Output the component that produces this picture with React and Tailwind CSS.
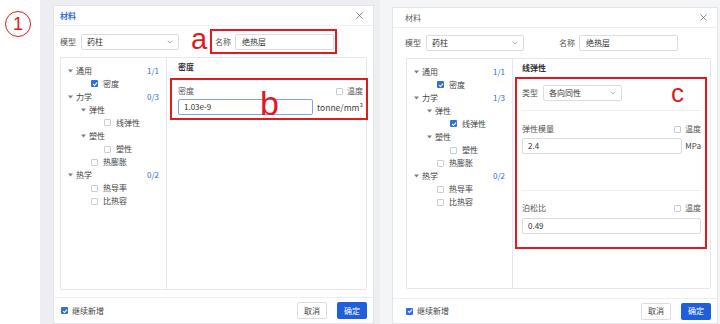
import { ChevronDown, X } from 'lucide-react';

// tree rows: g = group with caret, c = checkbox leaf
const leftTree = [
  { t: 'g', lv: 0, label: '通用', count: '1/1' },
  { t: 'c', lv: 1, label: '密度', checked: true },
  { t: 'g', lv: 0, label: '力学', count: '0/3' },
  { t: 'g', lv: 1, label: '弹性' },
  { t: 'c', lv: 2, label: '线弹性' },
  { t: 'g', lv: 1, label: '塑性' },
  { t: 'c', lv: 2, label: '塑性' },
  { t: 'c', lv: 1, label: '热膨胀' },
  { t: 'g', lv: 0, label: '热学', count: '0/2' },
  { t: 'c', lv: 1, label: '热导率' },
  { t: 'c', lv: 1, label: '比热容' },
];

const rightTree = leftTree.map((r) => {
  if (r.label === '力学') return { ...r, count: '1/3' };
  if (r.label === '线弹性') return { ...r, checked: true };
  return r;
});

function Checkbox({ checked }) {
  if (checked) {
    return (
      <span className="w-[7px] h-[7px] rounded-[1px] bg-[#2f6fe4] flex items-center justify-center shrink-0">
        <svg width="6" height="6" viewBox="0 0 10 10">
          <path d="M1.8 5.2 L4.2 7.5 L8.4 2.6" stroke="white" strokeWidth="1.8" fill="none" />
        </svg>
      </span>
    );
  }
  return <span className="w-[7px] h-[7px] rounded-[1px] border border-[#c9cdd4] bg-white shrink-0" />;
}

function Caret() {
  return (
    <svg width="5" height="4" viewBox="0 0 5 4" className="shrink-0">
      <path d="M0 0.5 H5 L2.5 3.5 Z" fill="#7a7f87" />
    </svg>
  );
}

function TreeRow({ row }) {
  const pad =
    row.t === 'g'
      ? row.lv === 0
        ? 'pl-[7px] gap-[3px]'
        : 'pl-[20px] gap-[3px]'
      : row.lv === 1
      ? 'pl-[30px] gap-[5px]'
      : 'pl-[43px] gap-[5px]';
  return (
    <div className={`h-[13.1px] flex items-center pr-[7px] ${pad}`}>
      {row.t === 'g' ? <Caret /> : <Checkbox checked={row.checked} />}
      <span className="text-[#444]">{row.label}</span>
      {row.count && <span className="ml-auto text-[#2f6fe4]">{row.count}</span>}
    </div>
  );
}

function Select({ value, w }) {
  return (
    <div className={`${w} h-[16px] border border-[#d9dce2] rounded-[2px] bg-white flex items-center pl-[5px] pr-[4px]`}>
      <span className="text-[#333]">{value}</span>
      <ChevronDown size={8} strokeWidth={1.6} className="ml-auto text-[#777]" />
    </div>
  );
}

function TempCheck() {
  return (
    <div className="flex items-center gap-[4px] ml-auto">
      <Checkbox />
      <span className="text-[#555]">温度</span>
    </div>
  );
}

function DensityPanel() {
  return (
    <div className="flex-1 flex flex-col">
      <div className="h-[18px] border-b border-[#eef0f3] flex items-center pl-[11px] font-bold text-[#333]">密度</div>
      <div className="relative mt-[2px] ml-[3px] mr-[2px] border-2 border-[#e3191f] pt-[6px] pb-[3px] pl-[6px] pr-[3px]">
        <div className="h-[10px] flex items-center">
          <span className="text-[#555]">密度</span>
          <TempCheck />
        </div>
        <div className="mt-[3px] flex items-center">
          <div className="w-[135px] h-[16px] border border-[#7ea4ea] rounded-[2px] flex items-center pl-[5px] text-[#333]">1.03e-9</div>
          <span className="ml-[4px] text-[#444] text-[8.5px]">tonne/mm³</span>
        </div>
        <span className="absolute left-[88px] top-[6px] text-[34px] leading-none text-[#e3191f] font-['Liberation_Sans',sans-serif]">b</span>
      </div>
    </div>
  );
}

function ElasticPanel() {
  return (
    <div className="flex-1 flex flex-col">
      <div className="h-[18px] flex items-center pl-[9px] font-bold text-[#333]">线弹性</div>
      <div className="relative h-[172px] ml-[2px] mr-[3px] border-2 border-[#e3191f] pt-[6px] pl-[5px] pr-[4px]">
        <div className="flex items-center gap-[5px]">
          <span className="text-[#555]">类型</span>
          <Select value="各向同性" w="w-[79px]" />
        </div>
        <div className="mt-[9px] border-t border-[#eceef1]" />
        <div className="mt-[13px] h-[10px] flex items-center">
          <span className="text-[#555]">弹性模量</span>
          <TempCheck />
        </div>
        <div className="mt-[4px] flex items-center">
          <div className="w-[160px] h-[16px] border border-[#d9dce2] rounded-[2px] flex items-center pl-[5px] text-[#333]">2.4</div>
          <span className="ml-auto text-[#444]">MPa</span>
        </div>
        <div className="mt-[36px] border-t border-[#eceef1]" />
        <div className="mt-[12px] h-[10px] flex items-center">
          <span className="text-[#555]">泊松比</span>
          <TempCheck />
        </div>
        <div className="mt-[5px] h-[16px] border border-[#d9dce2] rounded-[2px] flex items-center pl-[5px] text-[#333]">0.49</div>
        <span className="absolute left-[154px] top-[1px] text-[26px] leading-none text-[#e3191f] font-['Liberation_Sans',sans-serif]">c</span>
      </div>
    </div>
  );
}

function Dialog({ side }) {
  const isLeft = side === 'left';
  const tree = isLeft ? leftTree : rightTree;
  return (
    <div className={`h-full bg-white border border-[#e3e5e9] flex flex-col ${isLeft ? 'w-[321px]' : 'w-[326px]'}`}>
      <div className={`h-[20px] shrink-0 border-b border-[#eceef1] flex items-center pr-[8px] ${isLeft ? 'pl-[6px]' : 'pl-[12px]'}`}>
        <span className={isLeft ? 'text-[#2f6fe4] font-bold' : 'text-[#666]'}>材料</span>
        <X size={11} strokeWidth={1.4} className="ml-auto text-[#555]" />
      </div>
      <div className={`shrink-0 flex items-center pr-[36px] ${isLeft ? 'h-[31px] pl-[6px]' : 'h-[30px] pl-[12px]'}`}>
        <span className="text-[#555] mr-[5px]">模型</span>
        <Select value="药柱" w="w-[98px]" />
        <div className={`relative ml-auto h-[25px] border-2 pl-[3px] pr-[1px] flex items-center gap-[4px] ${isLeft ? 'border-[#e3191f]' : 'border-transparent'}`}>
          <span className="text-[#555]">名称</span>
          <div className="w-[99px] h-[16px] border border-[#d9dce2] rounded-[2px] flex items-center pl-[6px] text-[#333]">绝热层</div>
          {isLeft && (
            <span className="absolute left-[-21px] top-[-6px] text-[29px] leading-none text-[#e3191f] font-['Liberation_Sans',sans-serif]">a</span>
          )}
        </div>
      </div>
      <div className={`shrink-0 flex border border-[#e4e7ec] rounded-[2px] mr-[6px] ${isLeft ? 'h-[233px] ml-[6px]' : 'h-[231px] ml-[13px]'}`}>
        <div className="w-[106px] shrink-0 border-r border-[#e4e7ec] pt-[6px]">
          {tree.map((r, i) => (
            <TreeRow key={i} row={r} />
          ))}
        </div>
        {isLeft ? <DensityPanel /> : <ElasticPanel />}
      </div>
      <div className={`flex-1 mt-[7px] border-t border-[#eceef1] flex items-center pr-[6px] ${isLeft ? 'pl-[7px]' : 'pl-[13px] mt-[9px]'}`}>
        <div className="flex items-center gap-[4px]">
          <Checkbox checked />
          <span className="text-[#444]">继续新增</span>
        </div>
        <div className="ml-auto flex items-center gap-[10px]">
          <div className="w-[30px] h-[17px] border border-[#d9dce2] rounded-[2px] flex items-center justify-center text-[#444]">取消</div>
          <div className="w-[30px] h-[17px] rounded-[2px] bg-[#1f5fdc] flex items-center justify-center text-white">确定</div>
        </div>
      </div>
    </div>
  );
}

export default function App() {
  return (
    <div className="w-[720px] h-[324px] bg-white flex overflow-hidden text-[8px] leading-none font-['Noto_Sans_CJK_SC','Noto_Sans',sans-serif]">
      <div className="w-[40px] shrink-0 pt-[11px] pl-[5px]">
        <div className="w-[26px] h-[26px] rounded-full border-[1.5px] border-[#e3191f] flex items-center justify-center text-[#e3191f] text-[18px] font-['Liberation_Sans',sans-serif]">1</div>
      </div>
      <div className="w-[340px] shrink-0 bg-[#eceef2] pl-[13px] pt-[5px]">
        <Dialog side="left" />
      </div>
      <div className="w-[340px] shrink-0 bg-[#f4f5f7] pl-[12px] pt-[7px]">
        <Dialog side="right" />
      </div>
    </div>
  );
}
